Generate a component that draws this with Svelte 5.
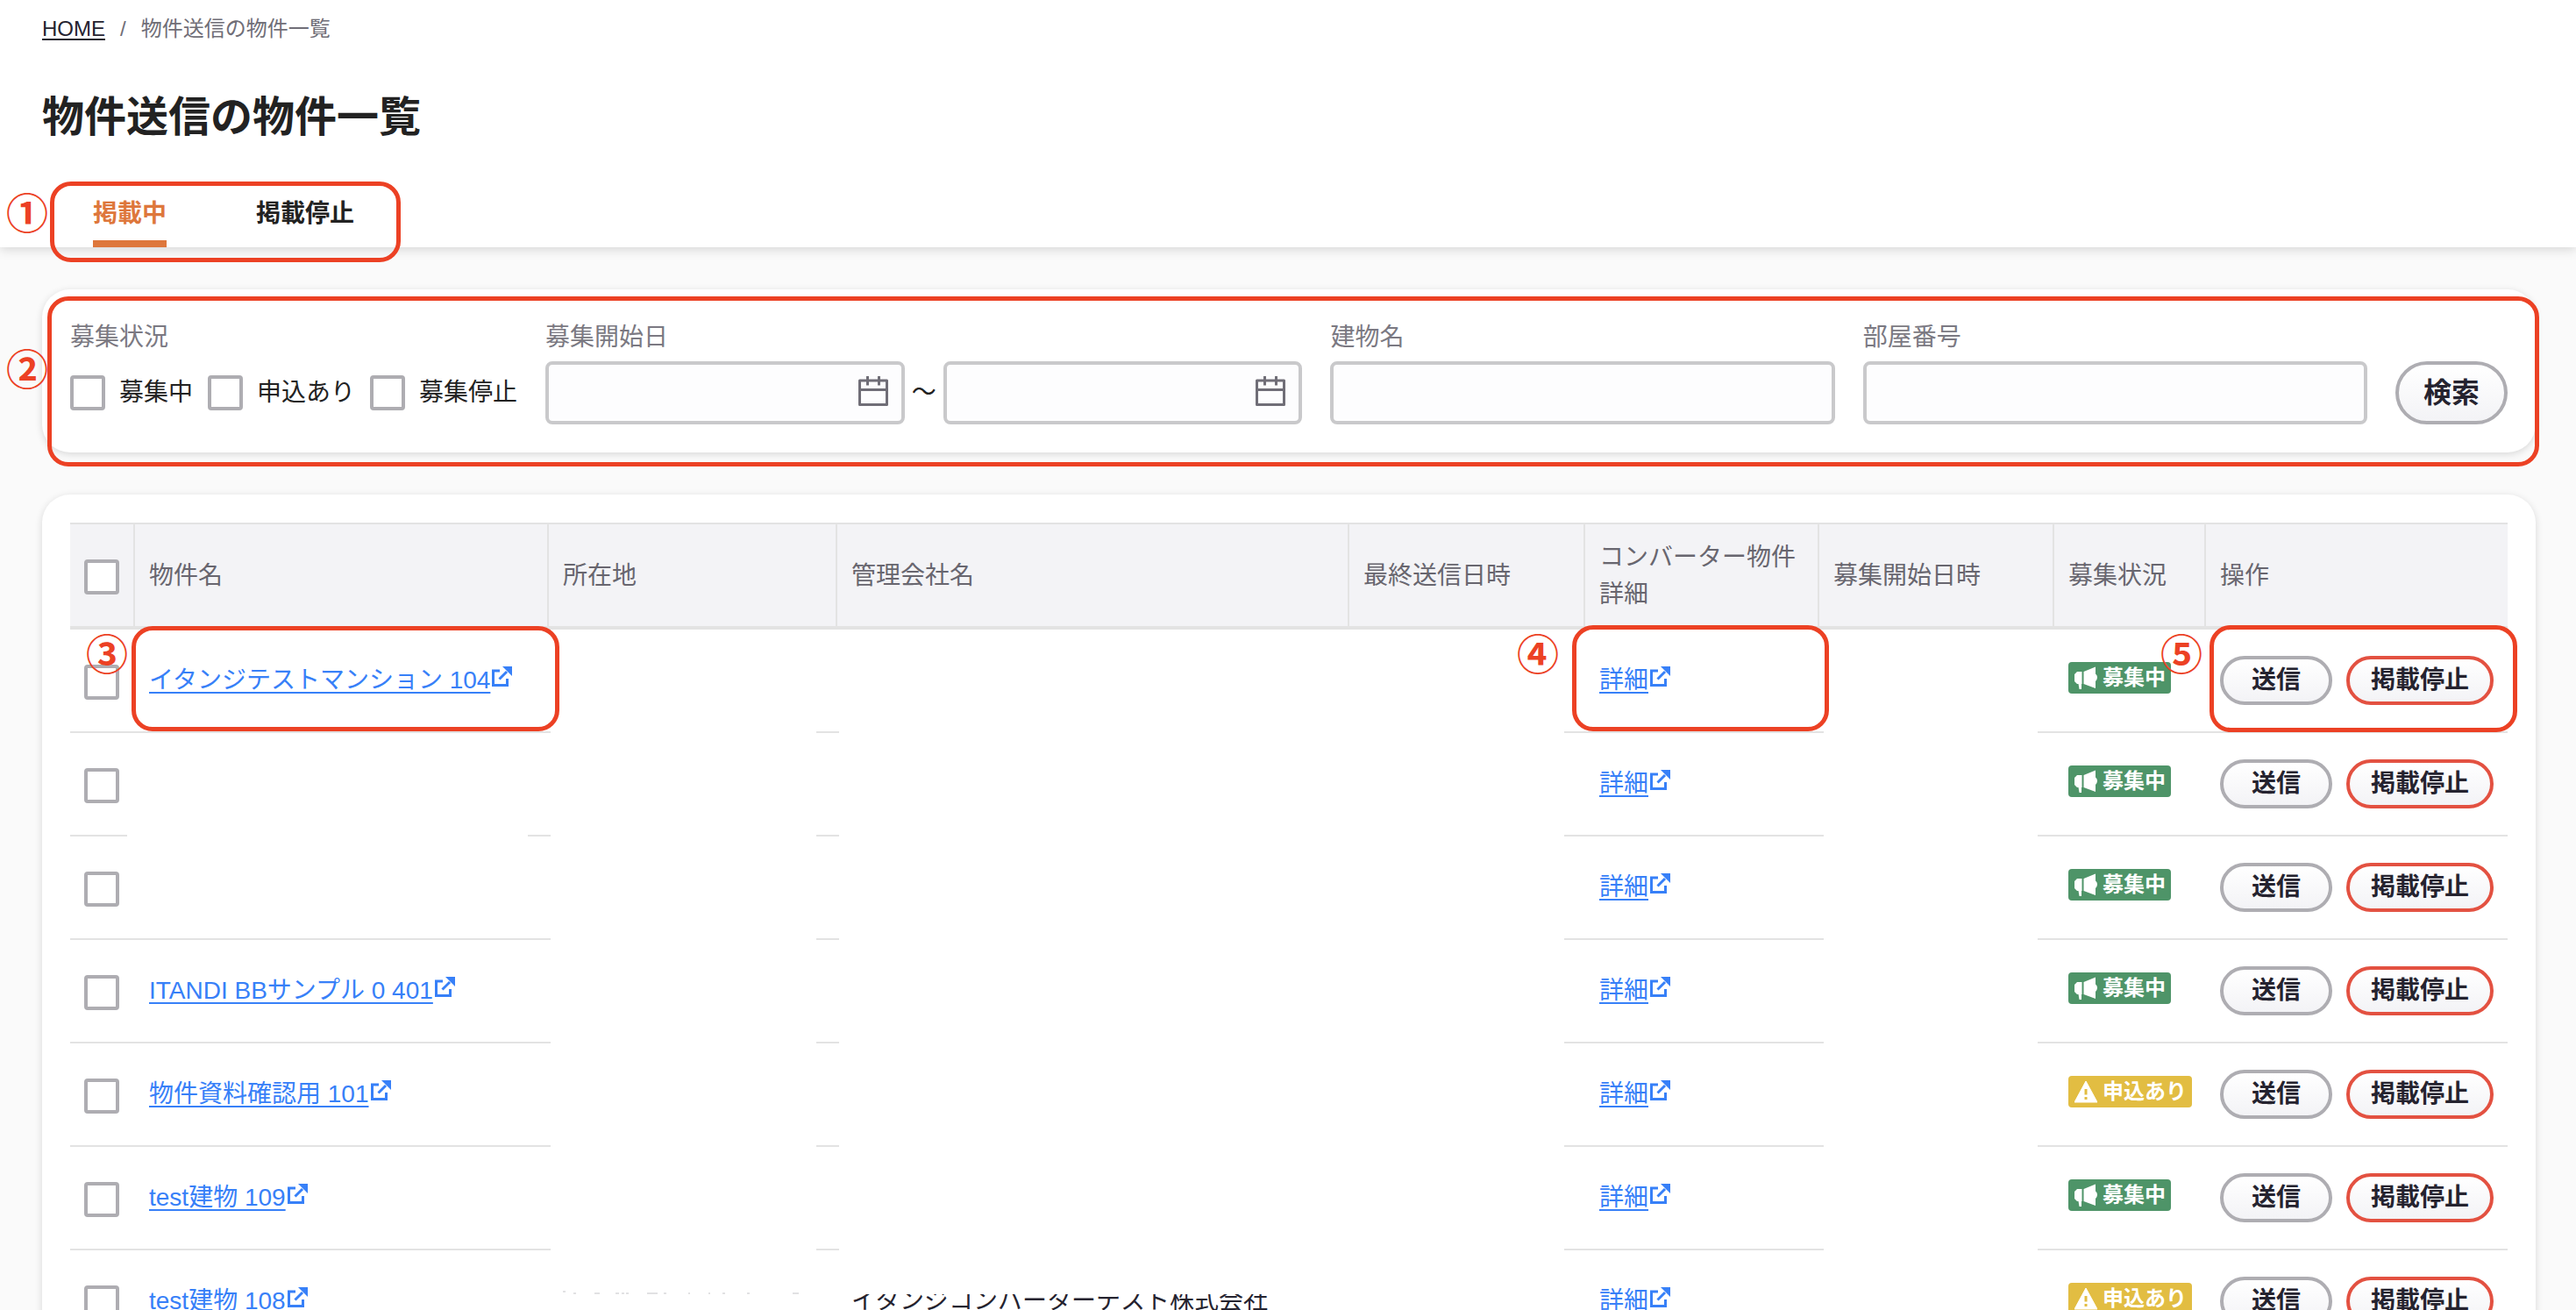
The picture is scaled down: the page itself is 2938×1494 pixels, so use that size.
<script>
  const statuses = ['募集中', '申込あり', '募集停止'];
  const columns = [
    { key: 'name', label: '物件名' },
    { key: 'address', label: '所在地' },
    { key: 'company', label: '管理会社名' },
    { key: 'sent', label: '最終送信日時' },
    { key: 'detail', label: 'コンバーター物件詳細' },
    { key: 'start', label: '募集開始日時' },
    { key: 'status', label: '募集状況' },
    { key: 'action', label: '操作' },
  ];
  const rows = [
    { name: 'イタンジテストマンション 104', company: '', status: '募集中' },
    { name: '', company: '', status: '募集中' },
    { name: '', company: '', status: '募集中' },
    { name: 'ITANDI BBサンプル 0 401', company: '', status: '募集中' },
    { name: '物件資料確認用 101', company: '', status: '申込あり' },
    { name: 'test建物 109', company: '', status: '募集中' },
    { name: 'test建物 108', company: 'イタンジコンバーターテスト株式会社', status: '申込あり' },
  ];
</script>

{#snippet external()}
  <svg class="external" viewBox="0 0 24 24" aria-hidden="true">
    <path d="M10 5H2.500V21.500H18.500V14" fill="none" stroke="currentColor" stroke-width="3" />
    <path d="M9.500 14.500L18 6" fill="none" stroke="currentColor" stroke-width="3" />
    <path d="M13 0H24V11Z" fill="currentColor" />
  </svg>
{/snippet}

{#snippet calendar()}
  <svg viewBox="0 0 34 34" aria-hidden="true">
    <path d="M1.500 5H32.500V32.500H1.500ZM1.500 15.500H32.500M10.500 0V10.500M23.500 0V10.500" fill="none" stroke="currentColor" stroke-width="3" stroke-linejoin="round" />
  </svg>
{/snippet}

<div class="page">
  <header>
    <nav class="crumbs" aria-label="パンくず">
      <a href="#home">HOME</a><span>/</span><span>物件送信の物件一覧</span>
    </nav>
    <h1>物件送信の物件一覧</h1>
    <nav class="tabs" aria-label="掲載状態">
      <a class="tab active" href="#published">掲載中</a>
      <a class="tab" href="#stopped">掲載停止</a>
      <div class="frame frame-tabs"></div>
      <span class="number number-tabs">①</span>
    </nav>
  </header>

  <main>
    <form class="card search">
      <div class="field" role="group" aria-labelledby="status-label">
        <span class="label" id="status-label">募集状況</span>
        <div class="checks">
          {#each statuses as s}
            <label class="check"><input type="checkbox" />{s}</label>
          {/each}
        </div>
      </div>
      <div class="field">
        <label class="label" for="date-from">募集開始日</label>
        <div class="dates">
          <div class="date">
            <input class="text" id="date-from" type="text" />
            <button class="picker" type="button" aria-label="開始日を選択">{@render calendar()}</button>
          </div>
          <span class="tilde">〜</span>
          <div class="date">
            <input class="text" type="text" aria-label="募集開始日の終わり" />
            <button class="picker" type="button" aria-label="終了日を選択">{@render calendar()}</button>
          </div>
        </div>
      </div>
      <div class="field">
        <label class="label" for="building">建物名</label>
        <input class="text" id="building" type="text" />
      </div>
      <div class="field">
        <label class="label" for="room">部屋番号</label>
        <input class="text" id="room" type="text" />
      </div>
      <button class="pill large" type="submit">検索</button>
      <div class="frame frame-search"></div>
      <span class="number number-search">②</span>
    </form>

    <section class="card list">
      <div class="table-wrap">
        <table>
          <colgroup>
            <col class="c-check" />
            {#each columns as c}<col class="c-{c.key}" />{/each}
          </colgroup>
          <thead>
            <tr>
              <th class="select"><input type="checkbox" aria-label="すべて選択" /></th>
              {#each columns as c}<th>{c.label}</th>{/each}
            </tr>
          </thead>
          <tbody>
            {#each rows as row, i}
              <tr>
                <td class="select"><input type="checkbox" aria-label="行を選択" /></td>
                <td>
                  {#if row.name}<a class="link" href="#room"><span>{row.name}</span>{@render external()}</a>{/if}
                  {#if i === 0}
                    <div class="frame frame-name"></div>
                    <span class="number number-name">③</span>
                  {/if}
                </td>
                <td></td>
                <td>{row.company}</td>
                <td></td>
                <td>
                  <a class="link" href="#detail"><span>詳細</span>{@render external()}</a>
                  {#if i === 0}
                    <div class="frame frame-detail"></div>
                    <span class="number number-detail">④</span>
                  {/if}
                </td>
                <td></td>
                <td class="state">
                  {#if row.status === '募集中'}
                    <span class="badge open">
                      <svg viewBox="0 0 26 26" aria-hidden="true">
                        <path d="M8.500 6V20H8V26H5.500L4.500 20H3L0 17V9L3 6ZM10.500 6L24 0.500V8.500Q26 10 26 12.500T24 17V25L10.500 20Z" fill="currentColor" />
                      </svg>{row.status}
                    </span>
                  {:else}
                    <span class="badge applied">
                      <svg viewBox="0 0 26 26" aria-hidden="true">
                        <path d="M13 1L26 25H0Z" fill="currentColor" stroke="currentColor" stroke-width="1" stroke-linejoin="round" />
                        <path d="M13 10V16.500M13 19V22" stroke="#e2bd42" stroke-width="3" />
                      </svg>{row.status}
                    </span>
                  {/if}
                </td>
                <td>
                  <div class="actions">
                    <button class="pill" type="button">送信</button>
                    <button class="pill danger" type="button">掲載停止</button>
                  </div>
                  {#if i === 0}
                    <div class="frame frame-action"></div>
                    <span class="number number-action">⑤</span>
                  {/if}
                </td>
              </tr>
            {/each}
          </tbody>
        </table>
        <div class="mask mask-name"></div>
        <div class="mask mask-address">
          <svg viewBox="0 0 303 4" aria-hidden="true">
            <path d="M14 1H17M26 3H29M50 3H56M74 3H78M81 3H84M86 3H89M110 3H122M129 3H132M157 3H159M180 3H182M196 3H199M224 3H227M276 3H283" stroke="#c4c4c8" stroke-width="1" />
          </svg>
        </div>
        <div class="mask mask-company"></div>
        <div class="mask mask-start"></div>
      </div>
    </section>
  </main>
</div>

<style>
  :global(body) {
    background: #fafafa;
  }
  .page {
    height: 100vh;
    overflow: hidden;
    font-family: 'Liberation Sans', 'Noto Sans CJK JP', sans-serif;
    font-size: 28px;
    line-height: 42px;
    color: #222;
  }
  .page * {
    box-sizing: border-box;
  }
  header {
    padding: 0 48px;
    background: #fff;
    box-shadow: 0 2px 12px rgba(0, 0, 0, 0.16);
  }
  .crumbs {
    display: flex;
    gap: 17px;
    font-size: 24px;
    line-height: 66px;
    color: #706e77;
  }
  .crumbs a {
    color: #25232f;
    text-underline-offset: 3px;
    text-decoration-thickness: 2px;
  }
  h1 {
    margin: 38px 0 46px;
    font-size: 48px;
    line-height: 60px;
    font-weight: 700;
  }
  .tabs {
    position: relative;
    display: flex;
    gap: 102px;
    width: fit-content;
    padding-left: 58px;
  }
  .tab {
    padding: 13px 0 9px;
    border-bottom: 8px solid transparent;
    font-weight: 700;
    color: #222;
    text-decoration: none;
  }
  .tab.active {
    color: #de773c;
    border-color: #de773c;
  }
  main {
    display: flex;
    flex-direction: column;
    gap: 48px;
    padding: 48px 46px 48px 48px;
  }
  .card {
    position: relative;
    padding: 32px;
    border-radius: 32px;
    background: #fff;
    box-shadow: 0 2px 8px rgba(0, 0, 0, 0.14);
  }
  .search {
    display: grid;
    grid-template-columns: auto 863fr 575fr 575fr auto;
    gap: 32px;
    align-items: end;
  }
  .field {
    display: flex;
    flex-direction: column;
    gap: 6px;
    min-width: 0;
  }
  .label {
    padding-top: 2px;
    color: #7b7982;
  }
  .checks {
    display: flex;
    align-items: center;
    gap: 17px;
    height: 72px;
  }
  .check {
    display: flex;
    align-items: center;
    gap: 16px;
    white-space: nowrap;
  }
  input[type='checkbox'] {
    appearance: none;
    display: block;
    width: 40px;
    height: 40px;
    margin: 0;
    border: 4px solid #aeadb2;
    border-radius: 4px;
    background: #fff;
  }
  .text {
    display: block;
    width: 100%;
    height: 72px;
    padding: 0 16px;
    border: 4px solid #c9c9cb;
    border-radius: 8px;
    background: #fdfdfe;
    font: inherit;
  }
  .dates {
    display: flex;
    align-items: center;
  }
  .date {
    position: relative;
    flex: 1;
  }
  .tilde {
    width: 44px;
    text-align: center;
  }
  .picker {
    position: absolute;
    top: 17px;
    right: 19px;
    width: 34px;
    height: 34px;
    padding: 0;
    border: 0;
    background: none;
    color: #706e77;
  }
  .picker svg {
    display: block;
  }
  .pill {
    min-width: 128px;
    height: 56px;
    padding: 0 24px;
    border: 4px solid #aeadb2;
    border-radius: 36px;
    background: linear-gradient(#fff, #f3f3f6) padding-box;
    font: inherit;
    font-weight: 700;
    line-height: 42px;
    color: #25232f;
    white-space: nowrap;
  }
  .pill.large {
    height: 72px;
    font-size: 32px;
  }
  .pill.danger {
    border-color: #e35141;
  }
  .table-wrap {
    position: relative;
  }
  table {
    width: 100%;
    table-layout: fixed;
    border-collapse: separate;
    border-spacing: 0;
  }
  .c-check { width: 74px; }
  .c-name { width: 472px; }
  .c-address { width: 329px; }
  .c-company { width: 584px; }
  .c-sent { width: 269px; }
  .c-detail { width: 267px; }
  .c-start { width: 268px; }
  .c-status { width: 173px; }
  .c-action { width: 344px; }
  th {
    height: 122px;
    padding: 2px 14px 0 16px;
    border-top: 2px solid #e3e3e3;
    border-right: 2px solid #e3e3e3;
    border-bottom: 4px solid #e3e3e3;
    background: #f3f3f6;
    color: #68666f;
    font-weight: 400;
    text-align: left;
  }
  th:last-child {
    border-right: 0;
  }
  td {
    position: relative;
    height: 118px;
    padding: 0 0 0 16px;
    border-bottom: 2px solid #e3e3e3;
    color: #25232f;
    white-space: nowrap;
  }
  .select {
    padding-top: 3px;
  }
  .state {
    padding-bottom: 6px;
  }
  .link {
    display: flex;
    gap: 1px;
    color: #3780f8;
    text-decoration: none;
  }
  .link span {
    text-decoration: underline;
    text-decoration-thickness: 2px;
    text-underline-offset: 4px;
  }
  .external {
    width: 24px;
    height: 24px;
    margin-top: 5px;
  }
  .badge {
    display: flex;
    align-items: center;
    gap: 6px;
    width: fit-content;
    height: 36px;
    padding: 0 6px 0 7px;
    border-radius: 4px;
    color: #fff;
    font-size: 24px;
    line-height: 36px;
    font-weight: 700;
  }
  .badge svg {
    width: 26px;
    height: 26px;
  }
  .open {
    background: #4e9468;
  }
  .applied {
    background: #e2bd42;
  }
  .actions {
    display: flex;
    gap: 16px;
  }
  .mask {
    position: absolute;
    z-index: 1;
    background: #fff;
  }
  .mask svg {
    position: absolute;
    bottom: 0;
    left: 0;
    width: 100%;
    height: 4px;
  }
  .mask-name { left: 65px; top: 260px; width: 457px; height: 200px; }
  .mask-address { left: 548px; top: 122px; width: 303px; height: 758px; }
  .mask-company { left: 877px; top: 122px; width: 827px; height: 758px; }
  .mask-start { left: 2000px; top: 122px; width: 244px; height: 758px; }
  .frame {
    position: absolute;
    z-index: 2;
    border: 5px solid #ec4124;
    border-radius: 24px;
    pointer-events: none;
  }
  .frame-tabs { inset: -3px -53px -17px 9px; }
  .frame-search { inset: 8px -4px -16px 6px; }
  .frame-name { inset: -4px -12px 0 -4px; }
  .frame-detail { inset: -5px -11px 0 -15px; }
  .frame-action { inset: -5px -11px -1px 4px; }
  .number {
    position: absolute;
    z-index: 2;
    width: 44px;
    height: 44px;
    display: flex;
    align-items: center;
    justify-content: center;
    font-family: 'Noto Sans CJK JP', sans-serif;
    font-size: 48px;
    line-height: 44px;
    font-weight: 700;
    color: #ec4124;
  }
  .number-tabs { left: -39px; top: 8px; }
  .number-search { left: -39px; top: 66px; }
  .number-name { left: -54px; top: 3px; }
  .number-detail { left: -76px; top: 3px; }
  .number-action { left: -50px; top: 3px; }
</style>
